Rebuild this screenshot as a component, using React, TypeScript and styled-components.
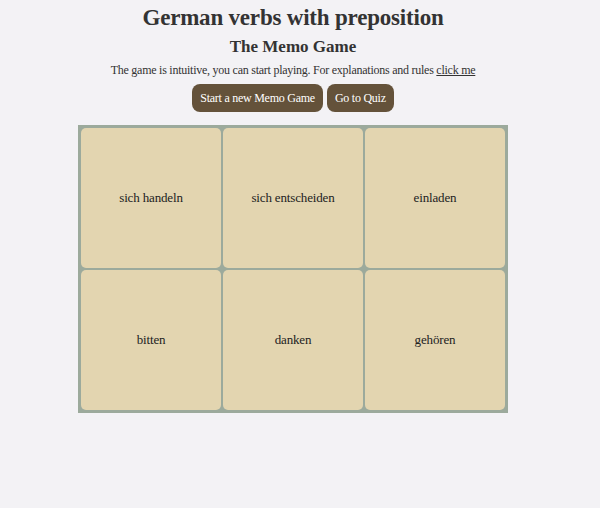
import React from "react";
import styled, { createGlobalStyle } from "styled-components";

const Global = createGlobalStyle`
  html, body { margin: 0; padding: 0; background: #f3f2f5; }
  body { font-family: "Liberation Serif", "Times New Roman", serif; color: #333333; }
`;

const Page = styled.div`
  display: flex;
  flex-direction: column;
  align-items: center;
  padding: 4px 14px 0 0;
`;

const Title = styled.h1`
  margin: 0;
  font-size: 23px;
  font-weight: bold;
  line-height: 28px;
  letter-spacing: -0.2px;
`;

const Subtitle = styled.h2`
  margin: 4px 0 0;
  font-size: 17px;
  font-weight: bold;
  line-height: 22px;
`;

const Intro = styled.p`
  margin: 4px 0 0;
  font-size: 12px;
  line-height: 16px;
  letter-spacing: -0.25px;
`;

const Link = styled.a`
  color: #333333;
  text-decoration: underline;
`;

const ButtonRow = styled.div`
  display: flex;
  gap: 4px;
  margin-top: 6px;
`;

const Button = styled.button`
  font-family: "Liberation Serif", "Times New Roman", serif;
  font-size: 12px;
  letter-spacing: -0.25px;
  color: #ffffff;
  background: #64523a;
  border: none;
  border-radius: 8px;
  height: 28px;
  padding: 0 8px;
`;

const Board = styled.div`
  margin-top: 13px;
  display: grid;
  grid-template-columns: repeat(3, 140px);
  grid-auto-rows: 140px;
  gap: 2px;
  padding: 3px;
  background: #9caa9c;
`;

const Card = styled.div`
  background: #e3d5b0;
  border-radius: 5px;
  display: flex;
  align-items: center;
  justify-content: center;
  font-size: 13px;
  letter-spacing: -0.15px;
  color: #222;
`;

const words = ["sich handeln", "sich entscheiden", "einladen", "bitten", "danken", "gehören"];

export default function App() {
  return (
    <>
      <Global />
      <Page>
        <Title>German verbs with preposition</Title>
        <Subtitle>The Memo Game</Subtitle>
        <Intro>
          The game is intuitive, you can start playing. For explanations and rules <Link href="#">click me</Link>
        </Intro>
        <ButtonRow>
          <Button>Start a new Memo Game</Button>
          <Button>Go to Quiz</Button>
        </ButtonRow>
        <Board>
          {words.map((w) => (
            <Card key={w}>{w}</Card>
          ))}
        </Board>
      </Page>
    </>
  );
}
